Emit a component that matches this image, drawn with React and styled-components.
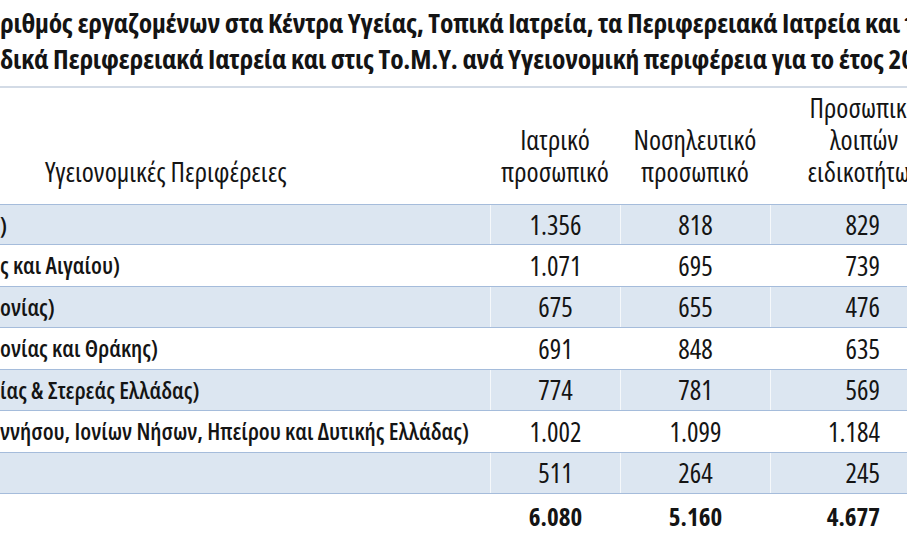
import React from 'react'
import styled, { createGlobalStyle } from 'styled-components'

const GlobalStyle = createGlobalStyle`
  html, body {
    margin: 0;
    padding: 0;
    background: #fff;
  }
  body {
    font-family: "Open Sans", "Noto Sans", sans-serif;
    color: #141414;
    overflow: hidden;
  }
`

const Page = styled.div`
  width: 907px;
  height: 536px;
  overflow: hidden;
`

const Title = styled.h1`
  margin: 0;
  padding-top: 5px;
  font-size: 27.5px;
  font-weight: 700;
  font-stretch: 85%;
  line-height: 36px;
  white-space: nowrap;
  overflow: hidden;
  letter-spacing: -0.2px;
`

const Table = styled.div`
  margin-top: 9px;
  border-top: 2px solid #d3dbe6;
`

const Row = styled.div`
  display: grid;
  grid-template-columns: 490px 130px 150px 188px;
  height: ${p => p.$h || 40}px;
  background: ${p => (p.$shade ? '#dce6f1' : '#fff')};
  border-bottom: ${p => (p.$last ? 'none' : '1px solid #a5bcdb')};
`

const HeadCell = styled.div`
  display: flex;
  flex-direction: column;
  justify-content: flex-end;
  align-items: ${p => (p.$left ? 'flex-start' : 'center')};
  padding-left: ${p => (p.$left ? 45 : 0)}px;
  padding-bottom: 16px;
  font-size: 27.5px;
  font-weight: 500;
  font-stretch: 85%;
  line-height: 32px;
  white-space: nowrap;
`

const Label = styled.div`
  display: flex;
  align-items: center;
  font-size: 23.5px;
  font-weight: 600;
  font-stretch: 85%;
  white-space: nowrap;
  overflow: hidden;
`

const Num = styled.div`
  display: flex;
  align-items: center;
  justify-content: ${p => (p.$right ? 'flex-end' : 'center')};
  padding-right: ${p => (p.$right ? 78 : 0)}px;
  font-size: ${p => (p.$bold ? 25 : 27)}px;
  font-weight: ${p => (p.$bold ? 700 : 400)};
  font-stretch: 85%;
  border-left: 1px solid ${p => (p.$shade ? 'rgba(255,255,255,0.7)' : 'transparent')};
`

const rows = [
  [')', '1.356', '818', '829'],
  ['ς και Αιγαίου)', '1.071', '695', '739'],
  ['ονίας)', '675', '655', '476'],
  ['ονίας και Θράκης)', '691', '848', '635'],
  ['ίας & Στερεάς Ελλάδας)', '774', '781', '569'],
  ['ννήσου, Ιονίων Νήσων, Ηπείρου και Δυτικής Ελλάδας)', '1.002', '1.099', '1.184'],
  ['', '511', '264', '245'],
]

export default function App() {
  return (
    <Page>
      <GlobalStyle />
      <Title>
        ριθμός εργαζομένων στα Κέντρα Υγείας, Τοπικά Ιατρεία, τα Περιφερειακά Ιατρεία και τα
        <br />
        δικά Περιφερειακά Ιατρεία και στις Το.Μ.Υ. ανά Υγειονομική περιφέρεια για το έτος 2018
      </Title>
      <Table>
        <Row $h={116}>
          <HeadCell $left>Υγειονομικές Περιφέρειες</HeadCell>
          <HeadCell>
            <span>Ιατρικό</span>
            <span>προσωπικό</span>
          </HeadCell>
          <HeadCell>
            <span>Νοσηλευτικό</span>
            <span>προσωπικό</span>
          </HeadCell>
          <HeadCell>
            <span>Προσωπικό</span>
            <span>λοιπών</span>
            <span>ειδικοτήτων</span>
          </HeadCell>
        </Row>
        {rows.map((r, i) => {
          const shade = i % 2 === 0
          return (
            <Row key={i} $shade={shade} $h={i === 0 ? 39 : 40.5}>
              <Label>{r[0]}</Label>
              <Num $shade={shade}>{r[1]}</Num>
              <Num $shade={shade}>{r[2]}</Num>
              <Num $shade={shade} $right>{r[3]}</Num>
            </Row>
          )
        })}
        <Row $h={43} $last>
          <Label />
          <Num $bold>6.080</Num>
          <Num $bold>5.160</Num>
          <Num $bold $right>4.677</Num>
        </Row>
      </Table>
    </Page>
  )
}
